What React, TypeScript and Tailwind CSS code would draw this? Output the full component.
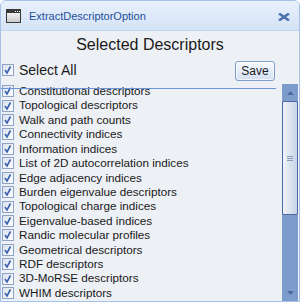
const descriptors = [
  'Constitutional descriptors',
  'Topological descriptors',
  'Walk and path counts',
  'Connectivity indices',
  'Information indices',
  'List of 2D autocorrelation indices',
  'Edge adjacency indices',
  'Burden eigenvalue descriptors',
  'Topological charge indices',
  'Eigenvalue-based indices',
  'Randic molecular profiles',
  'Geometrical descriptors',
  'RDF descriptors',
  '3D-MoRSE descriptors',
  'WHIM descriptors',
];

function CheckBox() {
  return (
    <svg width="12" height="12" viewBox="0 0 12 12" className="shrink-0">
      <defs>
        <linearGradient id="cbfill" x1="0" y1="0" x2="1" y2="1">
          <stop offset="0" stopColor="#d9e1ee" />
          <stop offset="1" stopColor="#ffffff" />
        </linearGradient>
      </defs>
      <rect x="0.5" y="0.5" width="11" height="11" fill="url(#cbfill)" stroke="#8ea4c6" />
      <path d="M3 6 L5 9 L8.5 2.5" stroke="#3b60ad" strokeWidth="1.6" fill="none" />
    </svg>
  );
}

function WindowIcon() {
  return (
    <svg width="15" height="14" viewBox="0 0 15 14">
      <defs>
        <linearGradient id="winbody" x1="0" y1="0" x2="0" y2="1">
          <stop offset="0" stopColor="#ffffff" />
          <stop offset="1" stopColor="#c9c9c9" />
        </linearGradient>
      </defs>
      <rect x="0.5" y="0.5" width="14" height="13" fill="url(#winbody)" stroke="#3a3a3a" />
      <rect x="1" y="1" width="13" height="3" fill="#3a3a3a" />
      <rect x="9" y="2" width="1" height="1" fill="#fff" />
      <rect x="11" y="2" width="1" height="1" fill="#fff" />
      <rect x="13" y="2" width="1" height="1" fill="#fff" />
    </svg>
  );
}

function ScrollBar() {
  return (
    <div className="w-[16px] mr-px flex flex-col bg-[#7c9ccb]">
      {/* up arrow */}
      <div className="h-[17px] flex items-center justify-center">
        <svg width="7" height="4" viewBox="0 0 7 4">
          <path d="M0 4 L3.5 0 L7 4 Z" fill="#4f6b9e" />
        </svg>
      </div>
      {/* thumb */}
      <div className="h-[114px] border border-[#4d68a3] rounded-[2px] bg-gradient-to-r from-[#f1f4f9] to-[#c6d3e6] flex items-center justify-center">
        <div className="flex flex-col gap-px">
          <div className="w-[6px] h-px bg-[#8a9bb5]" />
          <div className="w-[6px] h-px bg-[#8a9bb5]" />
          <div className="w-[6px] h-px bg-[#8a9bb5]" />
        </div>
      </div>
      <div className="flex-1" />
      {/* down arrow */}
      <div className="h-[17px] flex items-center justify-center">
        <svg width="7" height="4" viewBox="0 0 7 4">
          <path d="M0 0 L3.5 4 L7 0 Z" fill="#4f6b9e" />
        </svg>
      </div>
    </div>
  );
}

export default function App() {
  return (
    <div className="w-[300px] h-[302px] border border-[#a6c2e8] rounded-t-[6px] overflow-hidden bg-[#edf0f5] flex flex-col font-['Liberation_Sans',Arial,sans-serif]">
      {/* Title bar */}
      <div className="h-[30px] shrink-0 border-b border-[#c3d5ee] bg-gradient-to-b from-[#e8f0fb] to-[#d4e3f7] flex items-center pl-[5px] pr-[9px]">
        <WindowIcon />
        <span className="ml-[8px] text-[11px] text-[#1f4e9b] mt-[1px]">ExtractDescriptorOption</span>
        <svg width="12" height="8" viewBox="0 0 12 8" className="ml-auto mt-[2px]">
          <path d="M1 0.5 L11 7.5 M11 0.5 L1 7.5" stroke="#4b72ab" strokeWidth="2.6" />
        </svg>
      </div>

      {/* Header */}
      <div className="mt-[4px] text-center text-[16px] leading-[20px] text-[#1a1a1a]">Selected Descriptors</div>
      <div className="mt-[6px] flex items-start justify-between pl-[1px] pr-[24px]">
        <label className="flex items-center gap-[5px] mt-[1px] text-[14px] leading-[16px] text-[#1a1a1a]">
          <CheckBox />
          Select All
        </label>
        <button className="w-[40px] h-[20px] border border-[#7d9cca] rounded-[3px] bg-gradient-to-b from-[#f7fafe] to-[#d3dff1] text-[12px] leading-[16px] text-[#1a1a1a] shadow-[inset_0_0_0_1px_rgba(255,255,255,0.7)]">
          Save
        </button>
      </div>
      <div className="relative z-10 mt-[7px] w-[275px] h-px bg-[#6c94d8]" />

      {/* List with scrollbar */}
      <div className="-mt-[5px] flex-1 flex min-h-0">
        <div className="flex-1 overflow-hidden pl-[1px]">
          {descriptors.map((d) => (
            <div key={d} className="h-[14.43px] flex items-center gap-[5px] text-[11.7px] leading-[14.43px] text-[#1a1a1a] whitespace-nowrap">
              <CheckBox />
              <span>{d}</span>
            </div>
          ))}
        </div>
        <ScrollBar />
      </div>
    </div>
  );
}
